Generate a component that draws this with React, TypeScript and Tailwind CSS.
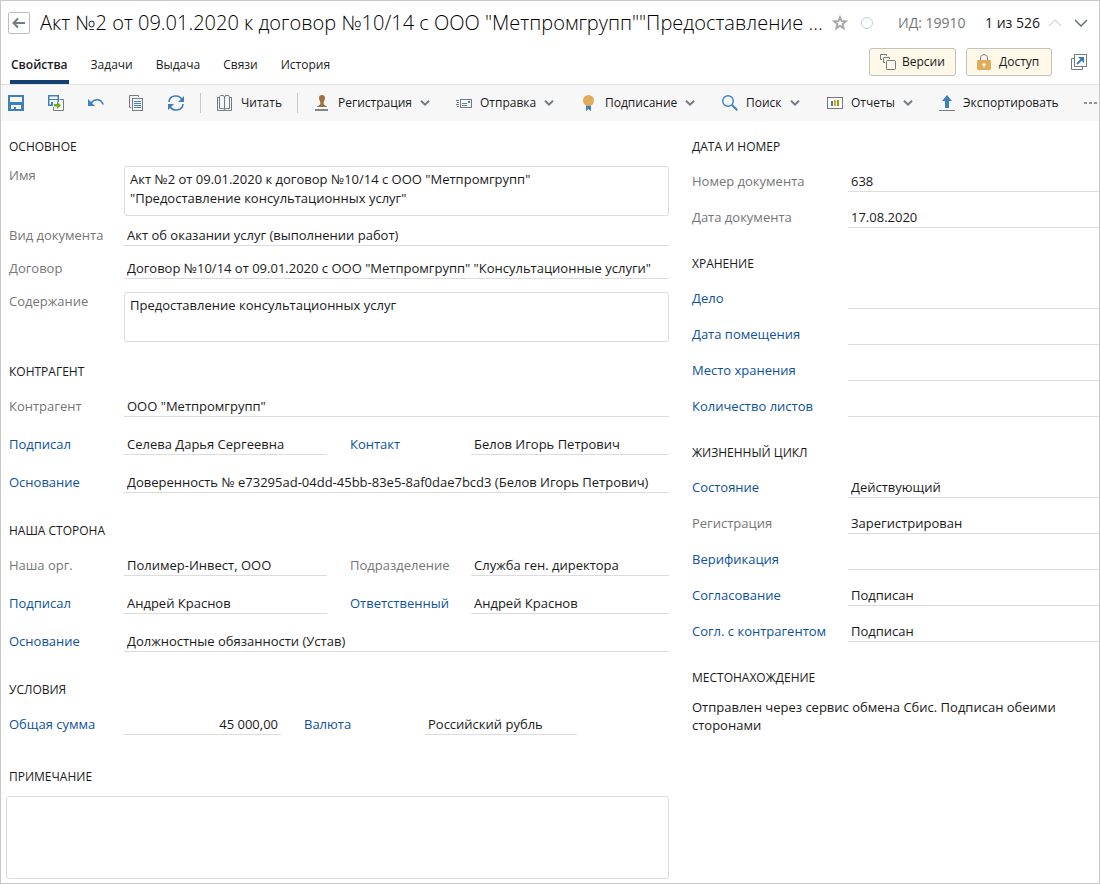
import React from "react";

// ================= ICONS =================
const BackIcon = () => (
  <svg width="14" height="12" viewBox="0 0 14 12" fill="none" stroke="#737b85" strokeWidth="2">
    <path d="M1.5 6H13M6 1.5L1.5 6L6 10.5" />
  </svg>
);

const StarIcon = () => (
  <svg width="16" height="16" viewBox="0 0 16 16" fill="none" stroke="#aaaaaa" strokeWidth="2">
    <path d="M8 2.2L9.6 6.1L13.8 6.4L10.6 9.1L11.6 13.2L8 11L4.4 13.2L5.4 9.1L2.2 6.4L6.4 6.1Z" />
  </svg>
);

const CircleIcon = () => (
  <svg width="14" height="14" viewBox="0 0 14 14" fill="none" stroke="#c3cfdd">
    <circle cx="7" cy="7" r="5.5" />
  </svg>
);

const VersionsIcon = () => (
  <svg width="16" height="16" viewBox="0 0 16 16" fill="none" stroke="#737b85">
    <path d="M2 5.5H.5V.5H6.5V2" />
    <path d="M5 8.5H3.5V3.5H9.5V5" />
    <rect x="6.5" y="6.5" width="9" height="9" rx="1" />
  </svg>
);

const LockIcon = () => (
  <svg width="14" height="16" viewBox="0 0 14 16" fill="none">
    <path d="M3.5 6V4C3.5 -.3 10.5 -.3 10.5 4V6" stroke="#737b85" />
    <rect x="0" y="6" width="14" height="10" rx="1" fill="#e0ac5b" />
    <path d="M5.5 9.5H8.5V11.5H7.5V13.5H6.5V11.5H5.5Z" fill="#fff" />
  </svg>
);

const PopupIcon = () => (
  <svg width="16" height="16" viewBox="0 0 16 16" fill="none">
    <path d="M3 4.5H.5V15.5H11.5V13" stroke="#737b85" />
    <rect x="3.5" y=".5" width="12" height="12" stroke="#737b85" />
    <path d="M6 10L11 5" stroke="#3a7dbb" strokeWidth="2" />
    <path d="M7 3H13V9Z" fill="#3a7dbb" />
  </svg>
);

const SaveIcon = () => (
  <svg width="16" height="16" viewBox="0 0 16 16">
    <path d="M0 0H16V16H0ZM2 2V7H14V2ZM3 10V14H6V12H8V14H13V10Z" fill="#3e7fbd" fillRule="evenodd" />
  </svg>
);

const SaveCloseIcon = () => (
  <svg width="16" height="16" viewBox="0 0 16 16">
    <path d="M11.5 4.5H15.5V15.5H5.5V12" fill="none" stroke="#737b85" />
    <path d="M0 0H11V7H9.5V5H1.5V9.5H5V11H0ZM1.5 1.5V4H9.5V1.5Z" fill="#3e7fbd" fillRule="evenodd" />
    <path d="M3 7H5V10H3Z" fill="#3e7fbd" />
    <path d="M6 9H9V6.5L13 10.2L9 14V11.5H6Z" fill="#72ab1a" />
  </svg>
);

const UndoIcon = () => (
  <svg width="16" height="16" viewBox="0 0 16 16">
    <path d="M0 4V11H7Z" fill="#3e7fbd" />
    <path d="M3 8C7 3 13 4 15.2 9.5" fill="none" stroke="#3e7fbd" strokeWidth="1.6" />
  </svg>
);

const CopyIcon = () => (
  <svg width="16" height="16" viewBox="0 0 16 16" fill="none">
    <path d="M3 12.5H1.5V.5H10.5V2" stroke="#737b85" />
    <rect x="4.5" y="3.5" width="10" height="12" stroke="#737b85" />
    <path d="M6 6.5H13M6 8.5H13M6 10.5H13M6 12.5H13" stroke="#3e7fbd" />
  </svg>
);

const RefreshIcon = () => (
  <svg width="16" height="16" viewBox="0 0 16 16">
    <path d="M1 7C1.5 0 11 -1 14 4.5M15 9C14.5 16 5 17 2 11.5" fill="none" stroke="#3e7fbd" strokeWidth="1.6" />
    <path d="M16 1V7H10ZM0 15V9H6Z" fill="#3e7fbd" />
  </svg>
);

const BookIcon = () => (
  <svg width="16" height="16" viewBox="0 0 16 16" fill="none" stroke="#737b85">
    <path d="M2.5 1.5Q3 .5 4 .5H6Q7.5 .5 7.5 2.5Q7.5 .5 9 .5H11Q12 .5 12.5 1.5V13.5H9L7.5 14.5L6 13.5H2.5Z" />
    <path d="M7.5 2V14" />
    <path d="M2.5 2.5H.5V15.5H14.5V2.5H12.5" />
  </svg>
);

const StampIcon = () => (
  <svg width="16" height="16" viewBox="0 0 16 16">
    <path d="M8 0C10 0 11 1.2 11 3C11 5 9.6 6 9.6 8C9.6 9.5 10 10 13 11.5V12H3V11.5C6 10 6.4 9.5 6.4 8C6.4 6 5 5 5 3C5 1.2 6 0 8 0Z" fill="#a0703f" />
    <path d="M1 15H14" stroke="#7d858f" strokeWidth="2" />
  </svg>
);

const MailIcon = () => (
  <svg width="16" height="16" viewBox="0 0 16 16" fill="none" stroke="#737b85">
    <rect x="4.5" y="4.5" width="11" height="8" />
    <path d="M0 5.5H3M1 7.5H3M0 9.5H3M1 11.5H3M6 8.5H11M6 10.5H11" />
    <path d="M12 7H14" stroke="#3e7fbd" strokeWidth="2" />
  </svg>
);

const SealIcon = () => (
  <svg width="16" height="16" viewBox="0 0 16 16">
    <path d="M5 10H10V16L7.5 14L5 16Z" fill="#3e7fbd" />
    <circle cx="7.5" cy="5.5" r="5.5" fill="#e0ac5b" />
  </svg>
);

const SearchIcon = () => (
  <svg width="16" height="16" viewBox="0 0 16 16" fill="none" stroke="#3e7fbd">
    <circle cx="6" cy="6" r="5.3" strokeWidth="1.4" />
    <path d="M10 10L15.3 15.3" strokeWidth="2" />
  </svg>
);

const ReportIcon = () => (
  <svg width="16" height="16" viewBox="0 0 16 16">
    <rect x=".5" y="2.5" width="15" height="11" fill="#fff" stroke="#737b85" />
    <path d="M4 6H6V11H4Z" fill="#3e7fbd" />
    <path d="M7 5H9V11H7Z" fill="#f39a1e" />
    <path d="M10 5H12V11H10Z" fill="#72ab1a" />
  </svg>
);

const ExportIcon = () => (
  <svg width="16" height="16" viewBox="0 0 16 16">
    <path d="M8 0L13 6H10V13H6V6H3Z" fill="#3e7fbd" />
    <path d="M0 15.5H16" stroke="#737b85" />
  </svg>
);

const DotsIcon = () => (
  <svg width="13" height="4" viewBox="0 0 13 4" fill="#8b929b">
    <path d="M0 1H3V3H0ZM5 1H8V3H5ZM10 1H13V3H10Z" />
  </svg>
);

const Caret = () => (
  <svg width="10" height="6" viewBox="0 0 10 6" fill="none" stroke="#737b85" strokeWidth="2">
    <path d="M1 .7L5 4.6L9 .7" />
  </svg>
);

const PagerArrow = ({ up = false }: { up?: boolean }) => (
  <svg width="14" height="8" viewBox="0 0 14 8" fill="none" stroke={up ? "#dadada" : "#5f6770"} strokeWidth="1.4">
    <path d={up ? "M1 7L7 1L13 7" : "M1 1L7 7L13 1"} />
  </svg>
);

// ================= DATA =================
const tabs = ["Свойства", "Задачи", "Выдача", "Связи", "История"];

const iconActions = [
  { label: "Сохранить", icon: SaveIcon },
  { label: "Сохранить и закрыть", icon: SaveCloseIcon },
  { label: "Отменить", icon: UndoIcon },
  { label: "Копировать", icon: CopyIcon },
  { label: "Обновить", icon: RefreshIcon },
];

const menuActions = [
  { label: "Регистрация", icon: StampIcon, width: "w-[142px]", menu: true },
  { label: "Отправка", icon: MailIcon, width: "w-[125px]", menu: true },
  { label: "Подписание", icon: SealIcon, width: "w-[141px]", menu: true },
  { label: "Поиск", icon: SearchIcon, width: "w-[105px]", menu: true },
  { label: "Отчеты", icon: ReportIcon, width: "w-[112px]", menu: true },
  { label: "Экспортировать", icon: ExportIcon, width: "w-[134px]", menu: false },
];

const storage = ["Дело", "Дата помещения", "Место хранения", "Количество листов"];

const lifecycle = [
  { id: "state", label: "Состояние", value: "Действующий" },
  { id: "registration", label: "Регистрация", value: "Зарегистрирован", muted: true },
  { id: "verification", label: "Верификация", value: "" },
  { id: "approval", label: "Согласование", value: "Подписан" },
  { id: "counterApproval", label: "Согл. с контрагентом", value: "Подписан" },
];

// ================= FORM PARTS =================
type FieldProps = {
  id: string;
  label: string;
  value?: string;
  muted?: boolean;
  labelClass?: string;
  inputClass?: string;
};

const inputBase =
  "h-[22px] w-full min-w-0 border-b border-[#dcdcde] bg-transparent pl-[3px] text-ellipsis outline-none";

const Heading = ({ children, className = "" }: any) => (
  <h2 className={`text-xs leading-[18px] uppercase ${className}`}>{children}</h2>
);

// label and input are two neighbouring grid cells of the parent row
const Field = ({ id, label, value = "", muted, labelClass = "", inputClass = "" }: FieldProps) => (
  <>
    <label
      htmlFor={id}
      className={`whitespace-nowrap leading-[22px] ${muted ? "text-[#767676]" : "text-[#0d529b]"} ${labelClass}`}
    >
      {label}
    </label>
    <input id={id} type="text" defaultValue={value} className={`${inputBase} ${inputClass}`} />
  </>
);

const Row = ({ children, className = "" }: any) => (
  <div className={`grid grid-cols-[115px_1fr] ${className}`}>{children}</div>
);

const PairRow = ({ children, className = "" }: any) => (
  <div className={`grid grid-cols-[115px_1fr_144px_198px] ${className}`}>{children}</div>
);

const SideRow = ({ children }: any) => (
  <div className="grid grid-cols-[156px_1fr]">{children}</div>
);

const Memo = ({ id, label, value, className = "" }: any) => (
  <Row className={className}>
    <label htmlFor={id} className="leading-[18px] text-[#767676]">
      {label}
    </label>
    <textarea
      id={id}
      defaultValue={value}
      className="h-[50px] w-full resize-none rounded-[3px] border border-[#dcdcde] px-[5px] py-[3px] leading-[19px] outline-none"
    />
  </Row>
);

export default function App() {
  return (
    <div className="flex min-h-screen flex-col border border-[#c8c8c8] bg-white font-['Open_Sans','Noto_Sans',sans-serif] text-[13px] text-[#1a1a1a]">
      {/* HEADER */}
      <header className="flex h-11 items-center pl-[7px] pr-[11px]">
        <button
          aria-label="Назад"
          className="flex size-[22px] shrink-0 items-center justify-center rounded-[2px] border border-[#bdbdbd]"
        >
          <BackIcon />
        </button>
        <h1 className="ml-[10px] min-w-0 flex-1 truncate text-xl font-light text-black">
          Акт №2 от 09.01.2020 к договор №10/14 с ООО "Метпромгрупп""Предоставление ...
        </h1>
        <button aria-label="В избранное" className="ml-px">
          <StarIcon />
        </button>
        <button aria-label="Отметка" className="ml-3">
          <CircleIcon />
        </button>
        <span className="ml-6 w-[87px] whitespace-nowrap text-sm text-[#767676]">ИД: 19910</span>
        <span className="w-[63px] whitespace-nowrap text-sm">1 из 526</span>
        <button aria-label="Предыдущий">
          <PagerArrow up />
        </button>
        <button aria-label="Следующий" className="ml-3">
          <PagerArrow />
        </button>
      </header>

      {/* TABS */}
      <div className="flex h-10 border-b border-[#e1e1e1] pl-[9px] pr-3 text-xs">
        <nav className="flex flex-1 gap-[21px]">
          {tabs.map((tab, i) => (
            <a
              key={tab}
              href="#"
              className={
                i === 0
                  ? "flex h-[39px] items-center border-b-4 border-[#143f6e] px-px pt-[5px] font-semibold"
                  : "flex h-[35px] items-center px-px pt-[5px]"
              }
            >
              {tab}
            </a>
          ))}
        </nav>
        <div className="flex h-[34px] items-center gap-[10px]">
          <button className="flex h-7 w-[87px] items-center gap-[6px] rounded-[3px] border border-[#c4c2bc] bg-[#fef8e8] pl-[10px]">
            <VersionsIcon />
            Версии
          </button>
          <button className="flex h-7 w-[86px] items-center gap-2 rounded-[3px] border border-[#c4c2bc] bg-[#fef8e8] pl-[10px]">
            <LockIcon />
            Доступ
          </button>
          <button aria-label="Открыть в новом окне" className="ml-[9px]">
            <PopupIcon />
          </button>
        </div>
      </div>

      {/* TOOLBAR */}
      <div className="flex h-9 items-center overflow-hidden bg-[#f7f7f7] pl-[7px] text-xs">
        <div className="flex gap-6">
          {iconActions.map((a) => (
            <button key={a.label} aria-label={a.label}>
              <a.icon />
            </button>
          ))}
        </div>
        <div className="ml-4 h-5 w-px bg-[#c9c9c9]" />
        <button className="ml-4 flex w-[80px] items-center gap-2 whitespace-nowrap">
          <BookIcon />
          Читать
        </button>
        <div className="h-5 w-px bg-[#c9c9c9]" />
        <div className="ml-4 flex flex-1">
          {menuActions.map((a) => (
            <button key={a.label} className={`flex shrink-0 items-center gap-2 whitespace-nowrap ${a.width}`}>
              <a.icon />
              {a.label}
              {a.menu && <Caret />}
            </button>
          ))}
        </div>
        <button aria-label="Ещё" className="mr-[2px]">
          <DotsIcon />
        </button>
      </div>

      {/* FORM */}
      <main className="flex gap-[23px] pt-[17px] pb-1">
        <form className="min-w-0 flex-1 pl-[5px]">
          <div className="pl-[3px]">
            <Heading>Основное</Heading>
            <Memo
              id="name"
              label="Имя"
              value={'Акт №2 от 09.01.2020 к договор №10/14 с ООО "Метпромгрупп"\n"Предоставление консультационных услуг"'}
              className="mt-[10px]"
            />
            <Row className="mt-2">
              <Field id="kind" label="Вид документа" value="Акт об оказании услуг (выполнении работ)" muted />
            </Row>
            <Row className="mt-[11px]">
              <Field
                id="contract"
                label="Договор"
                value={'Договор №10/14 от 09.01.2020 с ООО "Метпромгрупп" "Консультационные услуги"'}
                muted
              />
            </Row>
            <Memo id="content" label="Содержание" value="Предоставление консультационных услуг" className="mt-[13px]" />

            <Heading className="mt-[21px] mb-[14px]">Контрагент</Heading>
            <div className="flex flex-col gap-4">
              <Row>
                <Field id="company" label="Контрагент" value={'ООО "Метпромгрупп"'} muted />
              </Row>
              <PairRow>
                <Field id="companySigner" label="Подписал" value="Селева Дарья Сергеевна" />
                <Field id="contact" label="Контакт" value="Белов Игорь Петрович" labelClass="pl-[23px]" />
              </PairRow>
              <Row>
                <Field
                  id="companyBasis"
                  label="Основание"
                  value="Доверенность № e73295ad-04dd-45bb-83e5-8af0dae7bcd3 (Белов Игорь Петрович)"
                />
              </Row>
            </div>

            <Heading className="mt-[29px] mb-[14px]">Наша сторона</Heading>
            <div className="flex flex-col gap-4">
              <PairRow>
                <Field id="ourOrg" label="Наша орг." value="Полимер-Инвест, ООО" muted />
                <Field id="department" label="Подразделение" value="Служба ген. директора" muted labelClass="pl-[23px]" />
              </PairRow>
              <PairRow>
                <Field id="ourSigner" label="Подписал" value="Андрей Краснов" />
                <Field id="responsible" label="Ответственный" value="Андрей Краснов" labelClass="pl-[23px]" />
              </PairRow>
              <Row>
                <Field id="ourBasis" label="Основание" value="Должностные обязанности (Устав)" />
              </Row>
            </div>

            <Heading className="mt-[29px] mb-[14px]">Условия</Heading>
            <div className="grid grid-cols-[115px_157px_144px_152px]">
              <Field id="total" label="Общая сумма" value="45 000,00" inputClass="pr-[3px] text-right" />
              <Field id="currency" label="Валюта" value="Российский рубль" labelClass="pl-[23px]" />
            </div>

            <Heading className="mt-[33px] mb-[10px]">
              <label htmlFor="note">Примечание</label>
            </Heading>
          </div>
          <textarea
            id="note"
            className="block h-[83px] w-full resize-none rounded-[3px] border border-[#dcdcde] px-[5px] py-[3px] outline-none"
          />
        </form>

        <aside className="w-[407px] shrink-0">
          <Heading className="mb-[14px]">Дата и номер</Heading>
          <div className="flex flex-col gap-[14px]">
            <SideRow>
              <Field id="number" label="Номер документа" value="638" muted />
            </SideRow>
            <SideRow>
              <Field id="date" label="Дата документа" value="17.08.2020" muted />
            </SideRow>
          </div>

          <Heading className="mt-[27px] mb-[14px]">Хранение</Heading>
          <div className="flex flex-col gap-[14px]">
            {storage.map((label, i) => (
              <SideRow key={label}>
                <Field id={`storage${i}`} label={label} />
              </SideRow>
            ))}
          </div>

          <Heading className="mt-[27px] mb-[14px]">Жизненный цикл</Heading>
          <div className="flex flex-col gap-[14px]">
            {lifecycle.map((f) => (
              <SideRow key={f.id}>
                <Field {...f} />
              </SideRow>
            ))}
          </div>

          <Heading className="mt-[27px] mb-[11px]">Местонахождение</Heading>
          <p className="pr-4 leading-[18px]">
            Отправлен через сервис обмена Сбис. Подписан обеими сторонами
          </p>
        </aside>
      </main>
    </div>
  );
}
